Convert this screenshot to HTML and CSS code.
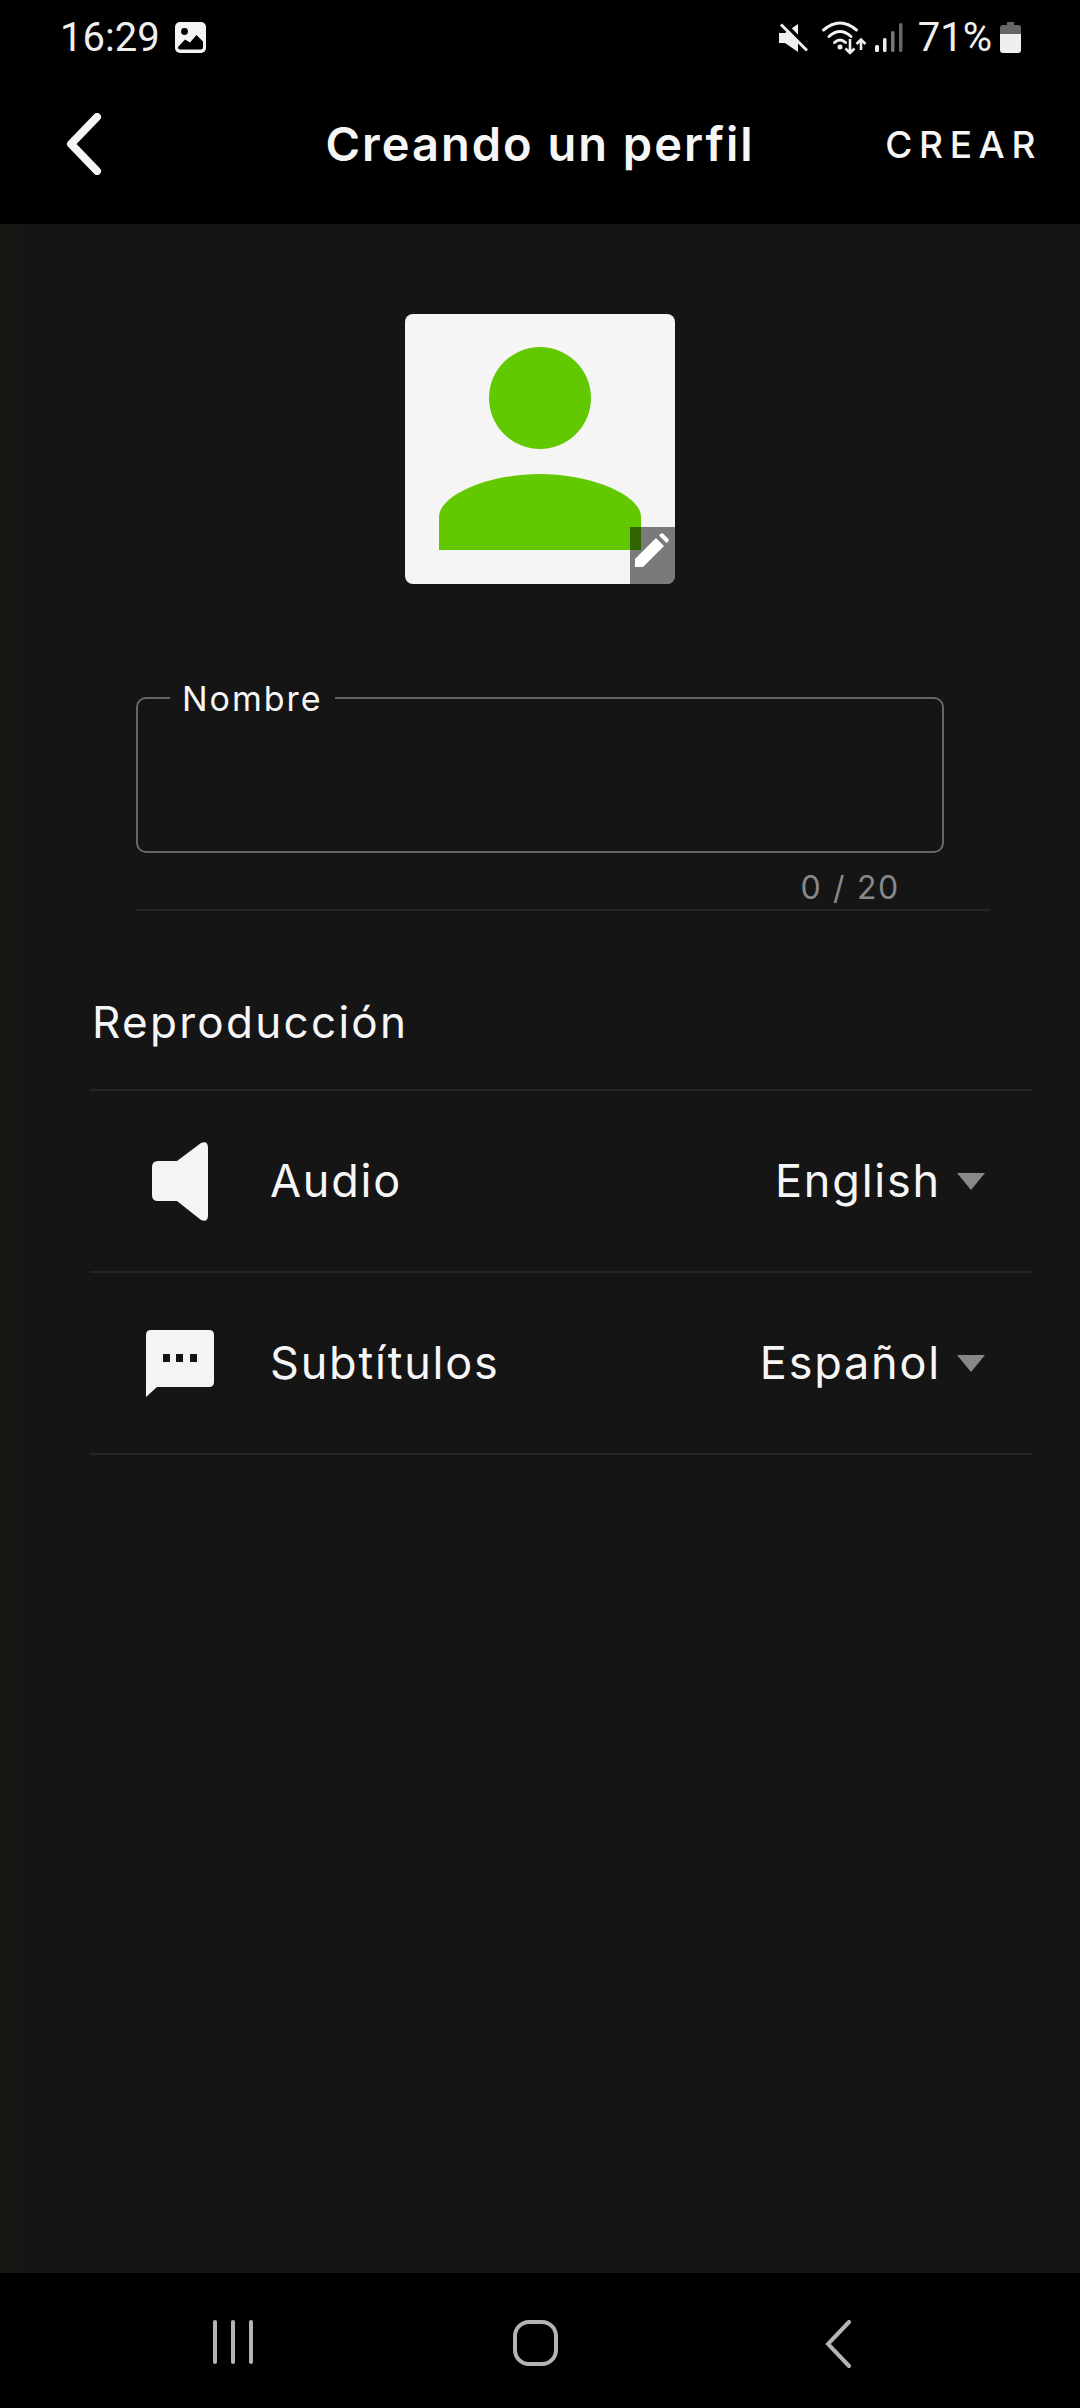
FILE: index.html
```html
<!DOCTYPE html>
<html lang="es">
<head>
  <meta charset="UTF-8">
  <title>Creando un perfil</title>
  <link rel="stylesheet" href="styles.css">
</head>
<body>
  <header class="top">
    <div class="status">
      <div class="status-left">
        <span class="time">16:29</span>
        <svg class="ic-photo" width="31" height="31" viewBox="0 0 31 31">
          <rect width="31" height="31" rx="5" fill="#f4f4f4"/>
          <circle cx="9.5" cy="9.5" r="3.4" fill="#000"/>
          <path d="M3 25 L10 17.5 L15 20.5 L21.5 13 L28 19.5 V25 Q28 27.5 26 27.5 H5 Q3 27.5 3 25Z" fill="#000"/>
        </svg>
      </div>
      <div class="status-right">
        <svg class="ic-mute" width="30" height="30" viewBox="0 0 30 30">
          <path d="M1 10 H7 L20 1 V29 L7 20 H1Z" fill="#f0f0f0"/>
          <path d="M6 0 L31 26" stroke="#000" stroke-width="4"/>
          <path d="M3 1.5 L29 27.5" stroke="#f0f0f0" stroke-width="3"/>
        </svg>
        <svg class="ic-wifi" width="40" height="34" viewBox="0 0 40 34">
          <g fill="none" stroke="#f0f0f0" stroke-width="3" stroke-linecap="round">
            <path d="M1.5 9 Q18 -5 34.5 9"/>
            <path d="M7 15.5 Q18 5.5 29 15.5"/>
            <path d="M12.5 21.5 Q18 16.5 23.5 21.5"/>
          </g>
          <circle cx="18" cy="26" r="2.5" fill="#f0f0f0"/>
          <path d="M28 18 V32 M23.5 27.5 L28 32 L32.5 27.5" fill="none" stroke="#f0f0f0" stroke-width="2.6"/>
          <path d="M39 29 V19 M34.5 23 L39 18.5 L43.5 23" fill="none" stroke="#f0f0f0" stroke-width="2.6"/>
        </svg>
        <svg class="ic-signal" width="28" height="29" viewBox="0 0 28 29">
          <rect x="0" y="22" width="4" height="7" rx="1.5" fill="#eee"/>
          <rect x="8" y="15" width="3.5" height="14" rx="1.5" fill="#eee"/>
          <rect x="16" y="8" width="3.5" height="21" rx="1.5" fill="#777"/>
          <rect x="24" y="0" width="3.5" height="29" rx="1.5" fill="#666"/>
        </svg>
        <span class="batt-text">71%</span>
        <svg class="ic-batt" width="21" height="31" viewBox="0 0 21 31">
          <path d="M7 0 H14 V3 H18 Q21 3 21 6 V12 H0 V6 Q0 3 3 3 H7Z" fill="#666"/>
          <path d="M0 12 H21 V28 Q21 31 18 31 H3 Q0 31 0 28Z" fill="#efefef"/>
        </svg>
      </div>
    </div>
    <div class="appbar">
      <svg class="ic-back" width="36" height="62" viewBox="0 0 36 62">
        <path d="M31 4 L5 31 L31 58" fill="none" stroke="#f4f4f4" stroke-width="8" stroke-linecap="round" stroke-linejoin="round"/>
      </svg>
      <h1 class="title">Creando un perfil</h1>
      <a class="create">CREAR</a>
    </div>
  </header>

  <main class="content">
    <div class="avatar">
      <svg class="person" width="202" height="203" viewBox="0 0 202 203">
        <circle cx="101" cy="51" r="51" fill="#62c800"/>
        <path d="M0 203 V170 C0 148 50 127 101 127 C152 127 202 148 202 170 V203Z" fill="#62c800"/>
      </svg>
      <div class="edit">
        <svg width="34" height="34" viewBox="0 0 34 34">
          <path d="M0 26 L21 5 L29 13 L8 34 H0Z" fill="#fff"/>
          <path d="M24 2.5 L26 .5 Q27 0 28 .5 L33.5 6 Q34 7 33.5 8 L31.5 10Z" fill="#fff"/>
        </svg>
      </div>
    </div>

    <div class="name-block">
      <div class="name-field">
        <label class="name-label">Nombre</label>
      </div>
      <div class="counter">0 / 20</div>
    </div>

    <section class="playback">
      <h2 class="section-title">Reproducción</h2>
      <div class="row">
        <div class="row-icon">
          <svg width="56" height="79" viewBox="0 0 56 79">
            <path d="M6 19 H25 L49 1 Q56 -2 56 6 V73 Q56 81 49 78 L25 59 H6 Q0 59 0 53 V25 Q0 19 6 19Z" fill="#f5f4f5"/>
          </svg>
        </div>
        <span class="row-label">Audio</span>
        <span class="row-value">English</span>
        <span class="caret"></span>
      </div>
      <div class="row">
        <div class="row-icon">
          <svg width="68" height="67" viewBox="0 0 68 67">
            <path d="M5 0 H63 Q68 0 68 5 V52 Q68 57 63 57 H11 L0 67 V5 Q0 0 5 0Z" fill="#f5f4f5"/>
            <rect x="17" y="24" width="7" height="8" fill="#161516"/>
            <rect x="30" y="24" width="7" height="8" fill="#161516"/>
            <rect x="44" y="24" width="7" height="8" fill="#161516"/>
          </svg>
        </div>
        <span class="row-label">Subtítulos</span>
        <span class="row-value">Español</span>
        <span class="caret"></span>
      </div>
    </section>
  </main>

  <nav class="navbar">
    <svg width="40" height="44" viewBox="0 0 40 44">
      <path d="M2 2 V42 M20 2 V42 M38 2 V42" stroke="#b4b4b4" stroke-width="4" stroke-linecap="round"/>
    </svg>
    <svg class="ic-home" width="46" height="46" viewBox="0 0 46 46">
      <rect x="2" y="2" width="41" height="42" rx="14" fill="none" stroke="#b4b4b4" stroke-width="4"/>
    </svg>
    <svg width="26" height="48" viewBox="0 0 26 48">
      <path d="M24 2 L3 24 L24 46" fill="none" stroke="#b4b4b4" stroke-width="4" stroke-linecap="round"/>
    </svg>
  </nav>
</body>
</html>
```

FILE: styles.css
```css
* {
  box-sizing: border-box;
}

body {
  margin: 0;
  width: 1080px;
  height: 2408px;
  display: flex;
  flex-direction: column;
  background: #161516;
  color: #f6f6f6;
  font-family: Inter, 'Noto Sans', sans-serif;
  overflow: hidden;
}

.top {
  height: 224px;
  background: #000;
}

.status {
  height: 72px;
  padding: 22px 59px 0 60px;
  display: flex;
  justify-content: space-between;
  align-items: flex-start;
}

.status-left,
.status-right {
  display: flex;
  align-items: center;
  height: 31px;
}

.time,
.batt-text {
  font-family: Roboto, sans-serif;
  font-size: 40px;
  color: #efefef;
  line-height: 31px;
}

.ic-photo {
  margin-left: 15px;
}

.ic-wifi {
  margin-left: 14px;
  overflow: visible;
}

.ic-signal {
  margin-left: 13px;
}

.batt-text {
  margin-left: 15px;
}

.ic-batt {
  margin-left: 8px;
}

.appbar {
  height: 144px;
  padding: 0 38px;
  display: grid;
  grid-template-columns: 1fr auto 1fr;
  align-items: center;
}

.ic-back {
  margin-left: 28px;
}

.title {
  margin: 0;
  padding-bottom: 2px;
  font-size: 47px;
  font-weight: 600;
  letter-spacing: 2px;
}

.create {
  justify-self: end;
  font-size: 37px;
  font-weight: 500;
  letter-spacing: 6.6px;
}

.content {
  flex: 1;
  padding-top: 90px;
  background: linear-gradient(to right, #181712, #161516 30px);
}

.avatar {
  position: relative;
  width: 270px;
  height: 270px;
  margin: 0 auto;
  padding: 33px 0 0 34px;
  background: #f5f5f6;
  border-radius: 8px;
  overflow: hidden;
}

.person {
  display: block;
}

.edit {
  position: absolute;
  right: 0;
  bottom: 0;
  width: 45px;
  height: 57px;
  padding: 6px 0 0 5px;
  background: rgba(0, 0, 0, 0.5);
}

.edit svg {
  display: block;
}

.name-block {
  margin: 113px 90px 0 136px;
  border-bottom: 2px solid #262526;
}

.name-field {
  position: relative;
  width: 808px;
  height: 156px;
  border: 2px solid #666;
  border-radius: 10px;
}

.name-label {
  position: absolute;
  top: -20px;
  left: 32px;
  padding: 0 12px;
  background: #161516;
  font-size: 34px;
  letter-spacing: 2px;
  line-height: 40px;
}

.counter {
  height: 56px;
  width: 764px;
  padding-top: 16px;
  text-align: right;
  font-size: 32px;
  letter-spacing: 1.7px;
  line-height: 38px;
  color: #888;
}

.playback {
  margin: 0 48px 0 90px;
}

.section-title {
  margin: 0;
  height: 180px;
  padding: 85px 0 0 2px;
  font-size: 44px;
  font-weight: 400;
  letter-spacing: 2.3px;
  line-height: 52px;
  border-bottom: 2px solid #262526;
}

.row {
  height: 182px;
  display: flex;
  align-items: center;
  border-bottom: 2px solid #262526;
}

.row-icon {
  width: 68px;
  margin: 0 56px;
  display: flex;
  justify-content: center;
}

.row-label {
  flex: 1;
  padding-bottom: 2px;
  font-size: 45px;
  font-weight: 400;
  letter-spacing: 1.8px;
}

.row-value {
  padding-bottom: 2px;
  font-size: 45px;
  font-weight: 400;
  letter-spacing: 1.8px;
}

.caret {
  margin: 0 47px 0 16px;
  border-left: 14px solid transparent;
  border-right: 14px solid transparent;
  border-top: 17px solid #888;
}

.navbar {
  height: 135px;
  padding: 47px 229px 0 213px;
  background: #000;
  display: flex;
  justify-content: space-between;
  align-items: flex-start;
}

.ic-home {
  margin-right: 7px;
}
```
